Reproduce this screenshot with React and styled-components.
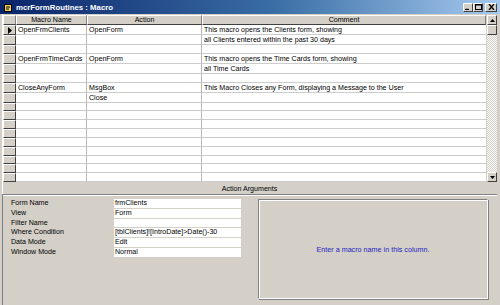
import React from "react";
import styled, { createGlobalStyle } from "styled-components";

const Global = createGlobalStyle`
  html, body {
    margin: 0;
    padding: 0;
    overflow: hidden;
    background: #d4d0c8;
  }
  * {
    box-sizing: border-box;
  }
`;

const Window = styled.div`
  width: 500px;
  height: 305px;
  background: #d4d0c8;
  display: flex;
  flex-direction: column;
  font-family: "Liberation Sans", Arial, sans-serif;
  font-size: 7.1px;
  color: #000;
  border-left: 2px solid #d4d0c8;
  border-right: 3px solid #d4d0c8;
  box-shadow: inset 1px 0 0 #fff;
`;

const TitleBar = styled.div`
  height: 14px;
  margin: 0 -3px 0 -2px;
  padding: 0 3px 0 4px;
  display: flex;
  align-items: center;
  gap: 4px;
  background: linear-gradient(to right, #0a246a 0%, #3a6ea5 55%, #a6caf0 100%);
  color: #fff;
  font-weight: bold;
  font-size: 7.8px;
`;

const TitleText = styled.div`
  flex: 1;
  white-space: nowrap;
`;

const TitleButtons = styled.div`
  display: flex;
  align-items: center;
`;

const TitleButton = styled.div`
  width: ${(p) => (p.$close ? 12 : 10)}px;
  height: 9px;
  margin-left: ${(p) => (p.$close ? 2 : 0)}px;
  background: #d4d0c8;
  border-style: solid;
  border-width: 1px;
  border-color: #fff #404040 #404040 #fff;
  display: flex;
  align-items: center;
  justify-content: center;
`;

const GridArea = styled.div`
  height: 167px;
  margin: 1px 0 0 1px;
  display: flex;
`;

const Grid = styled.div`
  flex: 1;
  display: grid;
  grid-template-columns: 13px 71px 115px 1fr;
  grid-template-rows: 10px repeat(17, 1fr);
  background: #fff;
`;

const HeadCell = styled.div`
  background: #d4d0c8;
  text-align: center;
  line-height: 9px;
  border-style: solid;
  border-width: 1px;
  border-color: #fff #808080 #404040 #fff;
  white-space: nowrap;
  overflow: hidden;
`;

const Selector = styled.div`
  background: #d4d0c8;
  border-style: solid;
  border-width: 1px;
  border-color: #fff #404040 #404040 #fff;
  display: flex;
  align-items: center;
  justify-content: center;
`;

const Cell = styled.div`
  background: #fff;
  border-bottom: 1px solid #cccccc;
  border-right: ${(p) => (p.$last ? "none" : "1px solid #b8b8b8")};
  padding: 1px 0 0 2px;
  line-height: 8px;
  white-space: nowrap;
  min-width: 0;
  display: flex;
  align-items: center;
`;

const Scrollbar = styled.div`
  width: 11px;
  display: flex;
  flex-direction: column;
  border-left: 1px solid #d4d0c8;
`;

const ScrollButton = styled.div`
  height: 10px;
  background: #d4d0c8;
  border-style: solid;
  border-width: 1px;
  border-color: #fff #404040 #404040 #fff;
  display: flex;
  align-items: center;
  justify-content: center;
`;

const Track = styled.div`
  flex: 1;
  background: repeating-conic-gradient(#ffffff 0 25%, #d4d0c8 0 50%) 0 0 / 2px 2px;
  opacity: 0.9;
`;

const Thumb = styled.div`
  height: 10px;
  background: #d4d0c8;
  border-style: solid;
  border-width: 1px;
  border-color: #fff #404040 #404040 #fff;
`;

const ArgsHeader = styled.div`
  height: 13px;
  display: flex;
  align-items: center;
  justify-content: center;
  padding-top: 1px;
  border-bottom: 1px solid #808080;
  box-shadow: 0 1px 0 #fff;
`;

const ArgsPane = styled.div`
  flex: 1;
  display: flex;
  padding: 4px 8px 6px 8px;
  gap: 16px;
  border-left: 1px solid #808080;
`;

const ArgList = styled.div`
  width: 231px;
  display: grid;
  grid-template-columns: 103px 127px;
  grid-auto-rows: 9.8px;
  align-content: start;
`;

const ArgLabel = styled.div`
  line-height: 9px;
  white-space: nowrap;
`;

const ArgValue = styled.div`
  background: #fff;
  height: 8.8px;
  line-height: 9px;
  padding-left: 1px;
  white-space: nowrap;
  overflow: hidden;
`;

const HelpBox = styled.div`
  flex: 1;
  margin-right: 1px;
  border-style: solid;
  border-width: 1px;
  border-color: #808080 #fff #fff #808080;
  box-shadow: inset 1px 1px 0 #fff, 1px 1px 0 #808080;
  display: flex;
  align-items: center;
  justify-content: center;
  color: #2323c0;
  font-size: 7.2px;
`;

const rows = [
  ["OpenFrmClients", "OpenForm", "This macro opens the Clients form, showing"],
  ["", "", "all Clients entered within the past 30 days"],
  ["", "", ""],
  ["OpenFrmTimeCards", "OpenForm", "This macro opens the Time Cards form, showing"],
  ["", "", "all Time Cards"],
  ["", "", ""],
  ["CloseAnyForm", "MsgBox", "This Macro Closes any Form, displaying a Message to the User"],
  ["", "Close", ""],
];
while (rows.length < 17) rows.push(["", "", ""]);

const args = [
  ["Form Name", "frmClients"],
  ["View", "Form"],
  ["Filter Name", ""],
  ["Where Condition", "[tblClients]![IntroDate]>Date()-30"],
  ["Data Mode", "Edit"],
  ["Window Mode", "Normal"],
];

const MacroIcon = () => (
  <svg width="8" height="9" viewBox="0 0 8 9">
    <rect x="0.5" y="1.5" width="7" height="7" fill="#f0d060" stroke="#000" />
    <path d="M2 4h4M2 6h3" stroke="#000" />
  </svg>
);

export default function App() {
  return (
    <>
      <Global />
      <Window>
        <TitleBar>
          <MacroIcon />
          <TitleText>mcrFormRoutines : Macro</TitleText>
          <TitleButtons>
            <TitleButton>
              <svg width="6" height="6" viewBox="0 0 6 6">
                <path d="M0 5.5h4" stroke="#000" strokeWidth="1.4" />
              </svg>
            </TitleButton>
            <TitleButton>
              <svg width="7" height="6" viewBox="0 0 7 6">
                <rect x="0.5" y="0.5" width="6" height="5" fill="none" stroke="#000" />
                <path d="M0 1h7" stroke="#000" />
              </svg>
            </TitleButton>
            <TitleButton $close>
              <svg width="7" height="6" viewBox="0 0 7 6">
                <path d="M1 0l5 6M6 0l-5 6" stroke="#000" strokeWidth="1.3" />
              </svg>
            </TitleButton>
          </TitleButtons>
        </TitleBar>
        <GridArea>
          <Grid>
            <HeadCell />
            <HeadCell>Macro Name</HeadCell>
            <HeadCell>Action</HeadCell>
            <HeadCell>Comment</HeadCell>
            {rows.map((r, i) => (
              <React.Fragment key={i}>
                <Selector>
                  {i === 0 && (
                    <svg width="4" height="7" viewBox="0 0 4 7">
                      <path d="M0 0l4 3.5L0 7z" fill="#000" />
                    </svg>
                  )}
                </Selector>
                <Cell>{r[0]}</Cell>
                <Cell>{r[1]}</Cell>
                <Cell $last>{r[2]}</Cell>
              </React.Fragment>
            ))}
          </Grid>
          <Scrollbar>
            <ScrollButton>
              <svg width="5" height="3" viewBox="0 0 5 3">
                <path d="M0 3l2.5-3L5 3z" fill="#000" />
              </svg>
            </ScrollButton>
            <Thumb />
            <Track />
            <ScrollButton>
              <svg width="5" height="3" viewBox="0 0 5 3">
                <path d="M0 0l2.5 3L5 0z" fill="#000" />
              </svg>
            </ScrollButton>
          </Scrollbar>
        </GridArea>
        <ArgsHeader>Action Arguments</ArgsHeader>
        <ArgsPane>
          <ArgList>
            {args.map(([label, value]) => (
              <React.Fragment key={label}>
                <ArgLabel>{label}</ArgLabel>
                <ArgValue>{value}</ArgValue>
              </React.Fragment>
            ))}
          </ArgList>
          <HelpBox>Enter a macro name in this column.</HelpBox>
        </ArgsPane>
      </Window>
    </>
  );
}
